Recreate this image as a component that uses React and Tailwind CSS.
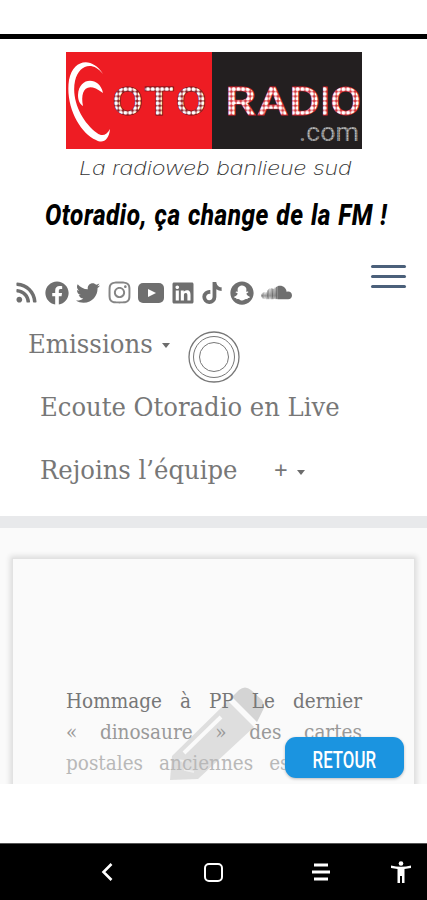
import React from "react";
import {
  FaRss, FaFacebook, FaTwitter, FaInstagram, FaLinkedin, FaTiktok, FaSnapchat, FaSoundcloud,
} from "react-icons/fa";

const LETTERS = [
  ["O", 46, 31], ["T", 78, 30], ["O", 109.500, 31],
  ["R", 159, 31], ["A", 191.500, 30], ["D", 223, 31], ["I", 254.500, 9], ["O", 264, 31],
];

function Logo() {
  return (
    <svg width="296" height="97" viewBox="0 0 296 97" className="block">
      <defs>
        <pattern id="bulbsRed" x="1.5" y="35" width="4.7" height="4.7" patternUnits="userSpaceOnUse">
          <rect width="4.7" height="4.7" fill="#8b1a20" />
          <rect x="0.5" y="0.3" width="4" height="4" rx="1.6" fill="#fff" />
        </pattern>
        <pattern id="bulbsBlack" x="1.5" y="35" width="4.7" height="4.7" patternUnits="userSpaceOnUse">
          <rect width="4.7" height="4.7" fill="#d5323a" />
          <rect x="0.5" y="0.3" width="4" height="4" rx="1.6" fill="#fff" />
        </pattern>
        <pattern id="pixels" width="2.6" height="2.6" patternUnits="userSpaceOnUse">
          <rect width="2.6" height="2.6" fill="#666" />
          <rect width="2" height="2" fill="#b5b5b5" />
        </pattern>
      </defs>
      <rect width="147" height="97" fill="#ee1c23" />
      <rect x="146" width="150" height="97" fill="#231f20" />
      <path d="M37 22C26 4 7 7 3 28C-1 54 14 81 30 88C37 92 43 88 44 77C41 83 36 85 31 81C16 70 5 48 9 29C13 12 27 9 37 22Z" fill="#fff" />
      <path d="M37 41C34 25 13 24 12 43C12 49 14 52 17 54C14 39 20 28 37 41Z" fill="#fff" />
      <g fontFamily="Roboto, sans-serif" fontWeight="500" fontSize="38">
        {LETTERS.map(([c, x, w], i) => (
          <g key={i} transform={`translate(${x} 0)`}>
            <text x="0" y="62.5" textLength={w} lengthAdjust="spacingAndGlyphs"
              fill={i < 3 ? "url(#bulbsRed)" : "url(#bulbsBlack)"}
              stroke={i < 3 ? "#6b1217" : "#c9202a"} strokeWidth="1" paintOrder="stroke">{c}</text>
          </g>
        ))}
      </g>
      <text x="233" y="88.5" textLength="60" lengthAdjust="spacingAndGlyphs" fontFamily="Roboto, sans-serif" fontSize="25" fill="url(#pixels)">.com</text>
    </svg>
  );
}

function Pencil() {
  return (
    <svg viewBox="0 0 96 96" className="absolute left-[156px] top-[127px] size-24">
      <path d="M3 70L59 15L85 41L29 93L1 94Z" fill="#dedede" />
      <path d="M63 11L70 4Q76-1 82 4L93 14Q97 20 93 26L88 36Z" fill="#d4d4d4" />
      <path d="M15 67L52 31" stroke="#fafafa" strokeWidth="4" />
      <path d="M8 74L14 75L16 84L25 86" stroke="#eee" strokeWidth="2" fill="none" />
    </svg>
  );
}

const Caret = ({ className = "" }) => (
  <span className={"inline-block border-x-[4.5px] border-t-[5px] border-x-transparent border-t-[#6c6c6c] " + className} />
);

export default function App() {
  return (
    <div className="flex h-[900px] w-[427px] flex-col overflow-hidden bg-white font-['DejaVu_Serif_Condensed','DejaVu_Serif',serif] text-[#777]">
      <div className="mt-[34px] h-[5px] shrink-0 bg-black" />
      <header className="h-[477px] shrink-0">
        <div className="ml-[66px] mt-[13px]"><Logo /></div>
        <div className="ml-[79px] mt-1 h-[32px] whitespace-nowrap font-['Inter',sans-serif] text-[19px] font-extralight italic leading-[32px] text-[#333]">
          <span className="inline-block origin-left scale-x-[1.21]">La radioweb banlieue sud</span>
        </div>
        <div className="ml-[45px] mt-[13px] h-[34px] whitespace-nowrap font-['Roboto',sans-serif] text-[29px] font-extrabold italic leading-[35px] text-black">
          <span className="inline-block origin-left scale-x-[0.842] tracking-[0.6px] [word-spacing:1px]">Otoradio, ça change de la FM !</span>
        </div>
        <div className="mt-[26px] flex h-[56px] items-start justify-between pl-[15px] pr-[21px]">
          <div className="mt-[19px] flex items-center text-[24px] text-[#6f6f6f]">
            <FaRss className="mr-[7px] size-[23px]" />
            <FaFacebook className="mr-[7px] size-[24px]" />
            <FaTwitter className="mr-[7px] size-[24px]" />
            <FaInstagram className="mr-[6px] size-[25px] text-[#858585]" />
            <svg viewBox="0 0 26 20" className="mr-[7px] h-5 w-[26px]">
              <rect width="26" height="20" rx="5" fill="currentColor" />
              <path d="M10 6L18 10L10 14Z" fill="#fff" />
            </svg>
            <FaLinkedin className="mr-[6px] size-[24px]" />
            <FaTiktok className="mr-[7px] size-[22px]" />
            <FaSnapchat className="mr-[7px] size-[24px]" />
            <FaSoundcloud className="size-[31px]" />
          </div>
          <div className="mt-[7px] flex w-[35px] flex-col gap-[7px]">
            <i className="h-[3px] rounded bg-[#4b607a]" />
            <i className="h-[3px] rounded bg-[#4b607a]" />
            <i className="h-[3px] rounded bg-[#4b607a]" />
          </div>
        </div>
        <nav className="relative whitespace-nowrap pt-[10px] text-[26px] leading-[40px]">
          <div className="flex h-[63px] items-start pl-[28px]">
            <span className="w-[134px]"><span className="inline-block origin-left scale-x-[1.045]">Emissions</span></span>
            <Caret className="mt-[19px]" />
          </div>
          <div className="h-[63px] pl-[40px]"><span className="inline-block origin-left scale-x-[1.04]">Ecoute Otoradio en Live</span></div>
          <div className="flex items-start pl-[40px]">
            <span className="w-[234px]"><span className="inline-block origin-left scale-x-[1.04]">Rejoins l’équipe</span></span>
            <span className="w-[23px] font-['Noto_Sans',sans-serif] text-[24px] leading-[40px]">+</span>
            <Caret className="mt-[20px]" />
          </div>
          <svg viewBox="0 0 52 52" className="absolute left-[188px] top-[17px] size-[52px]" fill="none" stroke="#777">
            <circle cx="26" cy="26" r="25" strokeWidth="1.3" />
            <circle cx="26" cy="26" r="20.5" />
            <circle cx="26" cy="26" r="14.5" />
          </svg>
        </nav>
      </header>
      <div className="h-[12px] shrink-0 bg-[#e8e9eb]" />
      <main className="h-[256px] shrink-0 overflow-hidden bg-[#fafafa] px-[12px] pt-[30px]">
        <section className="relative h-[260px] border border-[#e2e2e2] bg-[#fafafa] px-[53px] pt-[127px] shadow-[0_0_5px_2px_#ddd]">
          <Pencil />
          <div className="relative w-[296px] whitespace-nowrap text-[20.5px] leading-[31px]">
            <div className="flex justify-between text-[#777]"><span>Hommage</span><span>à</span><span>PP</span><span>Le</span><span>dernier</span></div>
            <div className="flex justify-between text-[#999]"><span>«</span><span>dinosaure</span><span>»</span><span>des</span><span>cartes</span></div>
            <div className="flex gap-[16px] text-[#b8b8b8]"><span>postales</span><span>anciennes</span><span>est</span></div>
          </div>
          <button className="absolute left-[272px] top-[178px] flex h-[41px] w-[119px] items-center justify-center rounded-[11px] bg-[#1b94e0] pt-[5px] font-['Roboto',sans-serif] text-[24px] font-medium text-white shadow-[0_1px_3px_#bbb]">
            <span className="scale-x-[0.7]">RETOUR</span>
          </button>
        </section>
      </main>
      <div className="h-[59px] shrink-0 bg-white" />
      <footer className="flex h-[57px] shrink-0 items-center border-t border-[#555] bg-black pl-[101px] text-white">
        <svg viewBox="0 0 12 18" className="h-[18px] w-3" fill="none" stroke="currentColor" strokeWidth="2.6"><path d="M10.500 1L2.500 9L10.500 17" /></svg>
        <span className="ml-[91px] size-[19px] rounded-[5px] border-[2.5px] border-white" />
        <svg viewBox="0 0 18 18" className="ml-[89px] size-[18px]" stroke="currentColor" strokeWidth="3"><path d="M2 2H16M0 9H18M2 16H16" /></svg>
        <svg viewBox="0 0 20 22" className="ml-[61px] h-[22px] w-5" fill="currentColor"><circle cx="10" cy="2.500" r="2.300" /><path d="M0 4.500Q10 7 20 4.500V7L13.500 8V22H11V15H9V22H6.500V8L0 7Z" /></svg>
      </footer>
    </div>
  );
}
